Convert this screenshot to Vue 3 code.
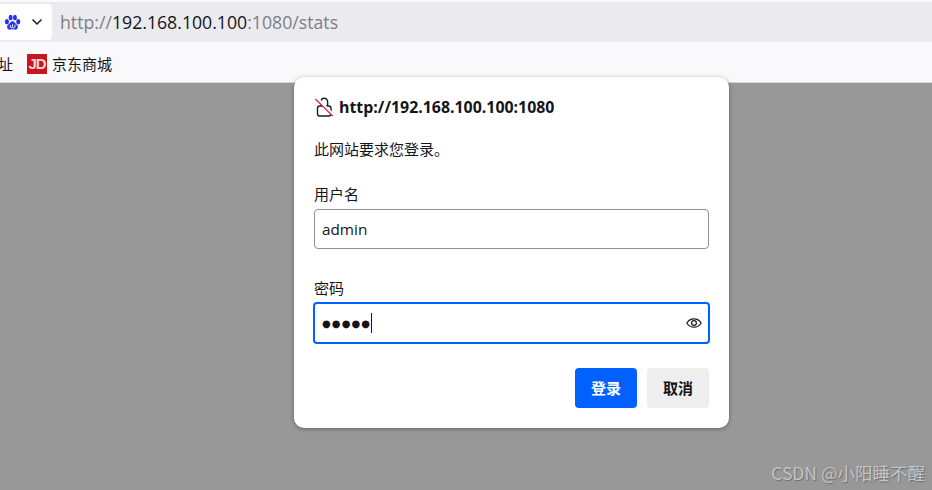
<script setup>
const pageUrl = { scheme: 'http://', host: '192.168.100.100', rest: ':1080/stats' }
</script>

<template>
  <div class="page">
    <header class="chrome">
      <div class="urlbar">
        <div class="identity">
          <svg class="paw" width="17" height="17" viewBox="0 0 18 18">
            <ellipse cx="3.1" cy="8.2" rx="2.2" ry="2.8" fill="#2932e1" />
            <ellipse cx="7" cy="3.6" rx="2.1" ry="2.9" fill="#2932e1" />
            <ellipse cx="11.6" cy="3.6" rx="2.1" ry="2.9" fill="#2932e1" />
            <ellipse cx="15.1" cy="8.2" rx="2.2" ry="2.8" fill="#2932e1" />
            <path d="M9 7.800c-2 0-2.600 2-4 3.100-1.500 1.100-2 2.200-1.600 3.600.5 1.800 2.300 2.300 3.600 2 1-.2 1.500-.3 2-.3s1 .1 2 .3c1.300.3 3.100-.2 3.600-2 .4-1.400-.1-2.500-1.600-3.600-1.400-1.100-2-3.100-4-3.100z" fill="#2932e1" />
            <path d="M6.600 11.600v2.200c0 1 2.400 1.200 2.400 0v-3M11.600 11.200v2.600c0 1-2.400 1.200-2.400 0" fill="none" stroke="#fff" stroke-width=".9" />
          </svg>
          <svg class="chev" width="12" height="8" viewBox="0 0 12 8">
            <path d="M1.500 1.500 6 6l4.500-4.500" fill="none" stroke="#1c1b22" stroke-width="1.500" />
          </svg>
        </div>
        <div class="url"><span class="dim">{{ pageUrl.scheme }}</span><span class="host">{{ pageUrl.host }}</span><span class="dim">{{ pageUrl.rest }}</span></div>
      </div>
      <div class="bookmarks">
        <span class="cut">址</span>
        <span class="jd">JD</span>
        <span class="mark">京东商城</span>
      </div>
    </header>

    <main class="backdrop">
      <span class="watermark">CSDN @小阳睡不醒</span>
    </main>

    <section class="dialog">
      <div class="origin">
        <svg width="20" height="20" viewBox="0 0 20 20">
          <path d="M7 9V4.500a3.300 3.300 0 0 1 6.600 0V9" fill="none" stroke="#1c1b22" stroke-width="1.400" />
          <rect x="3.500" y="9" width="13.500" height="10" rx="2.200" fill="none" stroke="#1c1b22" stroke-width="1.400" />
          <path d="M2.800 .8 19.500 18" stroke="#fff" stroke-width="2.500" />
          <path d="M1.300 2 18.700 19" stroke="#e22850" stroke-width="1.300" />
        </svg>
        <strong>http://192.168.100.100:1080</strong>
      </div>
      <p class="notice">此网站要求您登录。</p>

      <label class="label">用户名</label>
      <div class="input">admin</div>

      <label class="label label-pw">密码</label>
      <div class="input focused">
        <span class="dots">●●●●●</span><span class="caret"></span>
        <svg class="eye" width="16" height="16" viewBox="0 0 16 16">
          <path d="M.8 8C2.400 5.300 5 3.800 8 3.800s5.600 1.500 7.200 4.200c-1.600 2.700-4.200 4.200-7.200 4.200S2.400 10.700.8 8z" fill="none" stroke="#1c1b22" stroke-width="1.200" />
          <circle cx="8" cy="8" r="2.400" fill="none" stroke="#1c1b22" stroke-width="1.200" />
        </svg>
      </div>

      <div class="actions">
        <button class="btn primary">登录</button>
        <button class="btn">取消</button>
      </div>
    </section>
  </div>
</template>

<style>
html, body { margin: 0; padding: 0; overflow: hidden; }
</style>

<style scoped>
.page {
  position: relative;
  width: 932px;
  height: 490px;
  overflow: hidden;
  display: flex;
  flex-direction: column;
  font-family: "Noto Sans CJK SC", "Noto Sans", sans-serif;
  color: #15141a;
  background: #989898;
}
.chrome {
  background: #f9f9fb;
  border-bottom: 1px solid #d4d4d6;
  height: 82px;
  flex: none;
}
.urlbar {
  margin-top: 2px;
  height: 40px;
  background: #ebebef;
  display: flex;
  align-items: center;
}
.identity {
  width: 52px;
  height: 36px;
  background: #fff;
  border-radius: 0 4px 4px 0;
  display: flex;
  align-items: center;
  box-sizing: border-box;
  padding-left: 4px;
  gap: 10px;
}
.url {
  margin-left: 8px;
  font-family: "Open Sans", "Noto Sans", sans-serif;
  font-size: 17.700px;
  color: #15141a;
  white-space: nowrap;
}
.dim { color: #7e7e83; }
.bookmarks {
  height: 40px;
  padding-top: 3px;
  box-sizing: border-box;
  display: flex;
  align-items: center;
  font-size: 15px;
}
.cut { width: 27px; margin-left: -2px; flex: none; white-space: nowrap; }
.jd {
  width: 20px;
  height: 20px;
  margin-left: 2px;
  background: #c9151e;
  color: #f5d5d5;
  font: bold 15px/20px "Liberation Sans", sans-serif;
  text-align: center;
  flex: none;
  letter-spacing: -1px;
}
.mark { margin-left: 5px; }
.backdrop { flex: 1; position: relative; }
.watermark {
  position: absolute;
  right: 7px;
  bottom: 5px;
  font-size: 17.500px;
  color: #c4c4c4;
  text-shadow: 1px 1px 1px #6e6e6e;
  white-space: nowrap;
}
.dialog {
  position: absolute;
  left: 294px;
  top: 77px;
  width: 435px;
  height: 351px;
  box-sizing: border-box;
  padding: 20px;
  background: #fff;
  border-radius: 10px;
  box-shadow: 0 1px 4px rgba(0, 0, 0, .35);
  font-size: 15px;
}
.origin {
  display: flex;
  align-items: center;
  gap: 5px;
  height: 20px;
  font-family: "Open Sans", "Noto Sans", sans-serif;
  font-size: 15.900px;
}
.origin strong { font-weight: 700; }
.notice { margin: 22px 0 0; line-height: 20px; height: 20px; }
.label { display: block; margin-top: 25px; line-height: 20px; height: 20px; }
.label-pw { margin-top: 29px; }
.input {
  position: relative;
  box-sizing: border-box;
  margin-top: 5px;
  height: 40px;
  border: 1px solid #8f8f9d;
  border-radius: 4px;
  display: flex;
  align-items: center;
  padding-left: 7px;
  font-family: "Open Sans", "Noto Sans", sans-serif;
  font-size: 15.300px;
}
.focused {
  border: 2px solid #0061ff;
  padding-left: 7px;
  height: 42px;
  margin: 4px -1px 0;
}
.dots { font-family: "DejaVu Sans", sans-serif; font-size: 10px; letter-spacing: 1.100px; }
.caret { width: 1px; height: 20px; background: #15141a; margin-left: 0; }
.eye { position: absolute; right: 6px; top: 11px; }
.actions {
  display: flex;
  justify-content: flex-end;
  gap: 10px;
  margin-top: 24px;
}
.btn {
  width: 62px;
  height: 40px;
  border: none;
  border-radius: 4px;
  background: #eeeeee;
  color: #15141a;
  font: 700 15px "Noto Sans CJK SC", sans-serif;
  padding: 0 0 2px;
}
.primary { background: #0061ff; color: #fff; }
</style>
